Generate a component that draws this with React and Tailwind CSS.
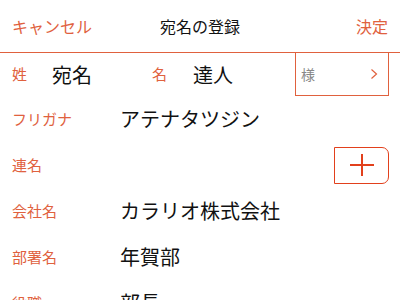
const ORANGE = "text-[#e0613e]";

function Row({ label, value, children }) {
  return (
    <div className="flex h-[46px] items-center pl-3 pr-[11px]">
      <span className={`w-[108px] text-[15px] ${ORANGE}`}>{label}</span>
      <span className="flex-1 text-[20px] text-[#111]">{value}</span>
      {children}
    </div>
  );
}

export default function App() {
  return (
    <div
      className="h-[300px] w-[400px] overflow-hidden bg-white"
      style={{ fontFamily: '"Noto Sans CJK JP", "Noto Sans", sans-serif' }}
    >
      {/* Header */}
      <div className="relative flex h-[53px] items-center justify-between border-b-[1.5px] border-[#e0613e] px-3">
        <button className={`text-[16px] ${ORANGE}`}>キャンセル</button>
        <span className="absolute left-1/2 -translate-x-1/2 text-[16px] text-[#111]">宛名の登録</span>
        <button className={`text-[16px] ${ORANGE}`}>決定</button>
      </div>

      {/* Name row */}
      <div className="flex h-[43px] items-center pl-3 pr-[11px]">
        <span className={`w-[40px] text-[15px] ${ORANGE}`}>姓</span>
        <span className="w-[100px] text-[20px] text-[#111]">宛名</span>
        <span className={`w-[41px] text-[15px] ${ORANGE}`}>名</span>
        <span className="flex-1 text-[20px] text-[#111]">達人</span>
        <div className="flex h-full w-[94px] items-center justify-between border-x border-b border-[#e0613e] pl-[5px] pr-[10px]">
          <span className="text-[14px] text-[#888]">様</span>
          <svg width="8" height="12" viewBox="0 0 8 12" fill="none" stroke="#e0613e" strokeWidth="1.2">
            <path d="M1.5 1.5 L6.5 6 L1.5 10.5" />
          </svg>
        </div>
      </div>

      <Row label="フリガナ" value="アテナタツジン" />
      <Row label="連名" value="">
        <button className="flex h-[37px] w-[55px] items-center justify-center rounded-r-[7px] border-[1.5px] border-[#e2401c]">
          <svg width="26" height="24" viewBox="0 0 26 24" stroke="#e2401c" strokeWidth="2">
            <path d="M1 12 H25 M13 1 V23" />
          </svg>
        </button>
      </Row>
      <Row label="会社名" value="カラリオ株式会社" />
      <Row label="部署名" value="年賀部" />
      <Row label="役職" value="部長" />
    </div>
  );
}
